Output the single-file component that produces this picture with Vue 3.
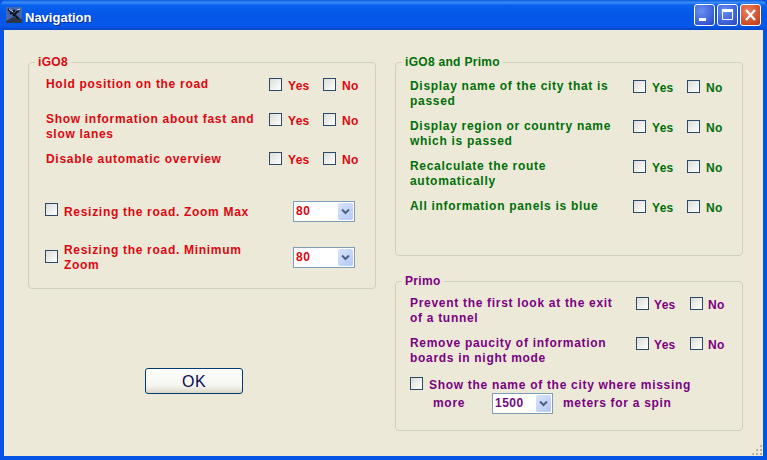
<script setup>
const red1 = [
  { text: ['Hold position on the road'], h: 35 },
  { text: ['Show information about fast and', 'slow lanes'], h: 39 },
  { text: ['Disable automatic overview'], h: 50 },
]
const red2 = [
  { text: ['Resizing the road. Zoom Max'], h: 46, tall: false },
  { text: ['Resizing the road. Minimum', 'Zoom'], h: 46, tall: true },
]
const green = [
  ['Display name of the city that is', 'passed'],
  ['Display region or country name', 'which is passed'],
  ['Recalculate the route', 'automatically'],
  ['All information panels is blue'],
]
const purple = [
  ['Prevent the first look at the exit', 'of a tunnel'],
  ['Remove paucity of information', 'boards in night mode'],
]
</script>

<template>
  <div class="window">
    <header class="titlebar">
      <svg class="app-icon" width="16" height="16" viewBox="0 0 16 16">
        <rect width="16" height="16" fill="#4468ac" />
        <path d="M0 14 L7 10 L16 12 L16 16 L0 16Z" fill="#2b3648" />
        <path d="M2 2 L13 12 M4 7 L9 3 M7 9 L13 3" stroke="#10141c" stroke-width="2" fill="none" />
        <path d="M3 2 L7 5 M11 3 L14 2" stroke="#dfe6f2" stroke-width="1" fill="none" />
      </svg>
      <span class="title">Navigation</span>
      <div class="controls">
        <button class="ctl blue">
          <svg width="19" height="20" viewBox="0 0 19 20"><rect x="4" y="13" width="7" height="3" fill="#fff" /></svg>
        </button>
        <button class="ctl blue">
          <svg width="19" height="20" viewBox="0 0 19 20"><path d="M4.5 5.5h10v9h-10z" fill="none" stroke="#fff" /><rect x="4" y="4" width="11" height="3" fill="#fff" /></svg>
        </button>
        <button class="ctl close">
          <svg width="19" height="20" viewBox="0 0 19 20"><path d="M5 5 L14 15 M14 5 L5 15" stroke="#fff" stroke-width="2.2" /></svg>
        </button>
      </div>
    </header>

    <main class="client">
      <div class="left-col">
        <section class="group red left-group">
          <h2 class="legend">iGO8</h2>
          <div v-for="r in red1" :key="r.text[0]" class="row left-row" :style="{ height: r.h + 'px' }">
            <div class="label"><div v-for="t in r.text" :key="t">{{ t }}</div></div>
            <div class="choice"><i class="box"></i><span>Yes</span></div>
            <div class="choice"><i class="box"></i><span>No</span></div>
          </div>
          <div v-for="r in red2" :key="r.text[0]" class="zoom-row" :style="{ height: r.h + 'px' }">
            <i class="box" :class="{ down: r.tall }"></i>
            <div class="zoom-label" :class="{ down: r.tall }"><div v-for="t in r.text" :key="t">{{ t }}</div></div>
            <div class="select s80"><span>80</span><b class="arrow"><svg width="9" height="7" viewBox="0 0 9 7"><path d="M1 1.5 L4.5 5 L8 1.5" fill="none" stroke="#4d6185" stroke-width="2" /></svg></b></div>
          </div>
        </section>
        <button class="ok">OK</button>
      </div>

      <div class="right-col">
        <section class="group green top-group">
          <h2 class="legend">iGO8 and Primo</h2>
          <div v-for="r in green" :key="r[0]" class="row green-row">
            <div class="label"><div v-for="t in r" :key="t">{{ t }}</div></div>
            <div class="choice"><i class="box"></i><span>Yes</span></div>
            <div class="choice"><i class="box"></i><span>No</span></div>
          </div>
        </section>

        <section class="group purple bottom-group">
          <h2 class="legend">Primo</h2>
          <div v-for="r in purple" :key="r[0]" class="row purple-row">
            <div class="label"><div v-for="t in r" :key="t">{{ t }}</div></div>
            <div class="choice"><i class="box"></i><span>Yes</span></div>
            <div class="choice"><i class="box"></i><span>No</span></div>
          </div>
          <div class="show-row"><i class="box"></i><span>Show the name of the city where missing</span></div>
          <div class="more-row">
            <span class="more">more</span>
            <div class="select s1500"><span>1500</span><b class="arrow"><svg width="9" height="7" viewBox="0 0 9 7"><path d="M1 1.5 L4.5 5 L8 1.5" fill="none" stroke="#4d6185" stroke-width="2" /></svg></b></div>
            <span>meters for a spin</span>
          </div>
        </section>
      </div>
      <div class="grip"></div>
    </main>
  </div>
</template>

<style>
html, body { margin: 0; background: #ece9d8; }
</style>

<style scoped>
.window {
  width: 767px;
  height: 460px;
  display: flex;
  flex-direction: column;
  box-sizing: border-box;
  background: #0554e3;
  overflow: hidden;
  font-family: "Liberation Sans", Arial, sans-serif;
}
.titlebar {
  height: 30px;
  flex: none;
  display: flex;
  align-items: center;
  padding: 0 6px 0 6px;
  border-radius: 7px 7px 0 0;
  background: linear-gradient(180deg, #0a5ae0 0%, #3b8bf6 8%, #0760ee 18%, #0556e6 50%, #0558ea 85%, #0347ce 100%);
}
.app-icon { flex: none; margin-right: 3px; margin-top: 0; }
.title {
  color: #fff;
  font: bold 13px "Liberation Sans", Arial, sans-serif;
  text-shadow: 1px 1px 0 #0a2f9a;
  margin-top: 4px;
}
.controls { margin-left: auto; display: flex; gap: 2px; margin-top: -1px; }
.ctl {
  width: 19px;
  height: 20px;
  padding: 0;
  box-sizing: content-box;
  display: block;
  border: 1px solid #fff;
  border-radius: 3px;
  margin: 0;
}
.ctl svg { display: block; }
.blue { background: radial-gradient(circle at 35% 30%, #6a90f0, #3f63dc 60%, #2a46b8); }
.close { background: radial-gradient(circle at 35% 30%, #ea8060, #d4522e 60%, #b43a1c); }

.client {
  position: relative;
  flex: 1;
  margin: 0 4px 4px;
  background: #ece9d8;
  display: flex;
  padding: 32px 20px 0 24px;
  gap: 19px;
}
.left-col { width: 348px; flex: none; }
.right-col { width: 348px; flex: none; display: flex; flex-direction: column; gap: 25px; }

.group {
  position: relative;
  box-sizing: border-box;
  border: 1px solid #d0d0bf;
  border-radius: 4px;
  font-size: 12px;
  font-weight: bold;
  letter-spacing: .7px;
  line-height: 15px;
}
.legend {
  position: absolute;
  top: -8px;
  left: 6px;
  margin: 0;
  padding: 0 3px;
  background: #ece9d8;
  font: inherit;
  letter-spacing: .3px;
}
.red { color: #dd0610; }
.green { color: #006f08; }
.purple { color: #7a0080; }
.left-group { height: 227px; padding-top: 14px; }
.top-group { height: 194px; padding-top: 16px; }
.bottom-group { height: 150px; padding-top: 14px; }

.row { display: flex; }
.left-row { padding-left: 17px; }
.left-row .label { width: 223px; flex: none; }
.left-row:nth-of-type(n+3) .label { margin-top: 1px; }
.green-row { height: 40px; padding-left: 14px; }
.green-row .label { width: 223px; flex: none; }
.purple-row { height: 40px; padding-left: 14px; }
.purple-row .label { width: 226px; flex: none; }
.choice { width: 54px; flex: none; display: flex; align-items: flex-start; letter-spacing: .3px; }
.choice span { margin: 2px 0 0 6px; }
.purple-row .choice span { margin-left: 5px; }
.box {
  display: block;
  flex: none;
  width: 11px;
  height: 11px;
  margin-top: 1px;
  border: 1px solid #2c4a68;
  background: linear-gradient(135deg, #dcdcd7, #fff);
}
.zoom-row { position: relative; display: flex; padding-left: 16px; align-items: flex-start; }
.zoom-row .box { margin-top: 2px; }
.zoom-row .box.down { margin-top: 3px; }
.zoom-label { margin-left: 6px; width: 229px; flex: none; margin-top: 4px; }
.zoom-label.down { margin-top: -4px; }
.select {
  box-sizing: border-box;
  height: 21px;
  border: 1px solid #7f9db9;
  background: #fff;
  display: flex;
  align-items: center;
  justify-content: space-between;
  padding: 0 1px 0 2px;
  letter-spacing: .5px;
}
.s80 { width: 62px; }
.s1500 { width: 61px; margin: 0 10px 0 0; color: #740a78; }
.arrow {
  width: 15px;
  height: 17px;
  border-radius: 2px;
  background: linear-gradient(135deg, #d8e4fb, #b4c8f2);
  display: flex;
  align-items: center;
  justify-content: center;
}
.show-row { display: flex; padding-left: 14px; margin-top: 1px; }
.show-row .box { margin: 0 6px 0 0; }
.show-row span { margin-top: 1px; }
.more-row { display: flex; align-items: center; margin-top: 0; height: 21px; }
.more { margin-left: 37px; width: 59px; flex: none; }

.ok {
  display: block;
  box-sizing: border-box;
  width: 98px;
  height: 26px;
  margin: 79px 0 0 117px;
  padding: 1px 0 0;
  border: 1px solid #003c74;
  border-radius: 3px;
  background: linear-gradient(180deg, #fff 0%, #f4f4ef 70%, #dcd8c8 100%);
  color: #0a0a50;
  font: 16px "Liberation Sans", Arial, sans-serif;
  letter-spacing: .5px;
}
.grip {
  position: absolute;
  right: 1px;
  bottom: 1px;
  width: 11px;
  height: 11px;
  background-image: radial-gradient(circle, #b0ad9c 1px, transparent 1.2px);
  background-size: 4px 4px;
  clip-path: polygon(100% 0, 100% 100%, 0 100%);
}
</style>
